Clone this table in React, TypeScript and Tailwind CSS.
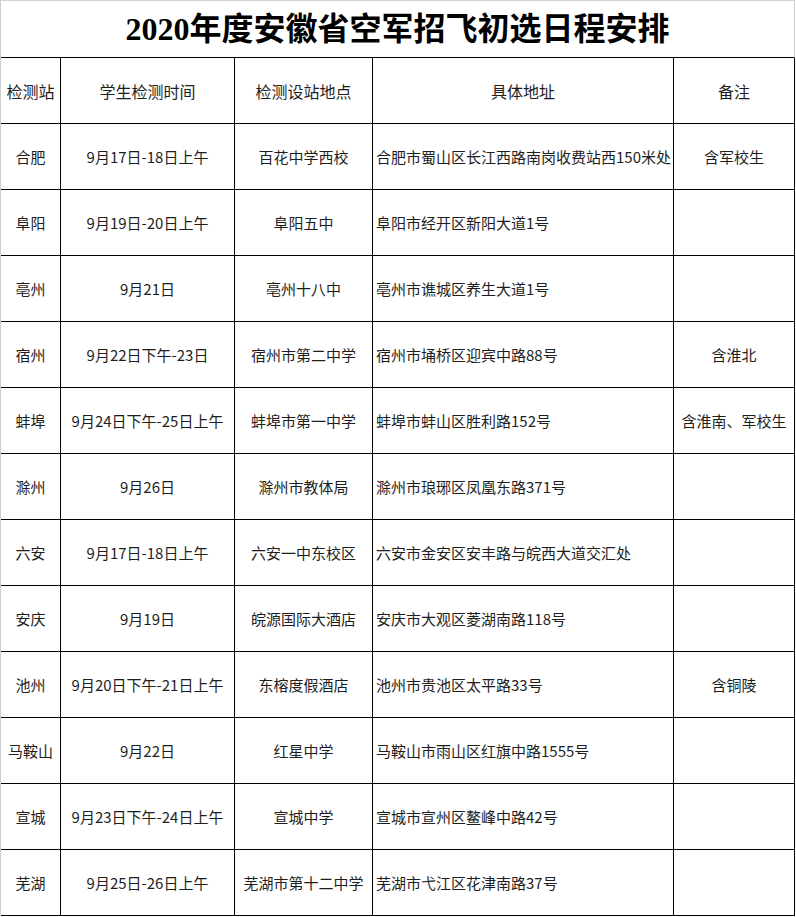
const rows = [
  ["合肥", "9月17日-18日上午", "百花中学西校", "合肥市蜀山区长江西路南岗收费站西150米处", "含军校生"],
  ["阜阳", "9月19日-20日上午", "阜阳五中", "阜阳市经开区新阳大道1号", ""],
  ["亳州", "9月21日", "亳州十八中", "亳州市谯城区养生大道1号", ""],
  ["宿州", "9月22日下午-23日", "宿州市第二中学", "宿州市埇桥区迎宾中路88号", "含淮北"],
  ["蚌埠", "9月24日下午-25日上午", "蚌埠市第一中学", "蚌埠市蚌山区胜利路152号", "含淮南、军校生"],
  ["滁州", "9月26日", "滁州市教体局", "滁州市琅琊区凤凰东路371号", ""],
  ["六安", "9月17日-18日上午", "六安一中东校区", "六安市金安区安丰路与皖西大道交汇处", ""],
  ["安庆", "9月19日", "皖源国际大酒店", "安庆市大观区菱湖南路118号", ""],
  ["池州", "9月20日下午-21日上午", "东榕度假酒店", "池州市贵池区太平路33号", "含铜陵"],
  ["马鞍山", "9月22日", "红星中学", "马鞍山市雨山区红旗中路1555号", ""],
  ["宣城", "9月23日下午-24日上午", "宣城中学", "宣城市宣州区鳌峰中路42号", ""],
  ["芜湖", "9月25日-26日上午", "芜湖市第十二中学", "芜湖市弋江区花津南路37号", ""],
];

const header = ["检测站", "学生检测时间", "检测设站地点", "具体地址", "备注"];

function Row({ cells, isHeader }: { cells: string[]; isHeader?: boolean }) {
  return (
    <div className="grid h-[66px] grid-cols-[60px_174px_138px_301px_121px]">
      {cells.map((c, i) => (
        <div
          key={i}
          className={`flex items-center whitespace-nowrap border-b border-r border-black leading-none text-[#1e1e1e] ${
            isHeader ? "text-[16px]" : "text-[15px]"
          } ${i === 3 && !isHeader ? "justify-start pl-[3px]" : "justify-center"}`}
        >
          {c}
        </div>
      ))}
    </div>
  );
}

export default function App() {
  return (
    <div className="w-[796px] h-[917px] bg-white overflow-hidden">
      <div className="w-[795px] border-l border-[#cfcfcf]">
        {/* title */}
        <div className="h-[58px] border-t border-r border-b border-t-[#d4d4d4] border-r-[#cfcfcf] border-b-black flex items-center justify-center">
          <h1 className="text-[32px] font-bold leading-none text-black [font-family:'Liberation_Serif','Noto_Sans_CJK_SC',serif]">
            2020年度安徽省空军招飞初选日程安排
          </h1>
        </div>
        <div className="[font-family:'Noto_Sans_CJK_SC',sans-serif]">
          <Row cells={header} isHeader />
          {rows.map((r) => (
            <Row key={r[0]} cells={r} />
          ))}
        </div>
      </div>
    </div>
  );
}
